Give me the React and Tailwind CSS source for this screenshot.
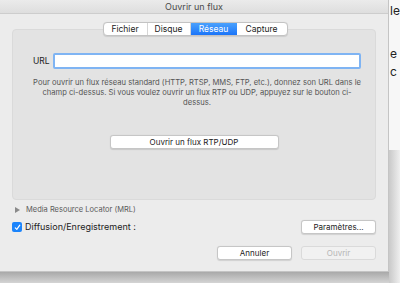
import React from "react";

const font = { fontFamily: "Inter, 'Liberation Sans', sans-serif" };

function Tab({ label, active, last }) {
  return (
    <div
      className={
        "h-full flex items-center justify-center text-[8.5px] " +
        (active
          ? "bg-gradient-to-b from-[#4aa1fd] to-[#1670f8] text-white"
          : "text-[#222] " + (last ? "" : "border-r border-[#d6d6d6]"))
      }
    >
      {label}
    </div>
  );
}

function Button({ children, className = "", disabled }) {
  return (
    <div
      className={
        "h-[14px] flex items-center justify-center rounded-[3px] border text-[8px] " +
        (disabled
          ? "bg-[#f1f1f1] border-[#dadada] text-[#b5b5b5]"
          : "bg-white border-[#c6c6c6] text-[#222] shadow-[0_0.5px_1px_rgba(0,0,0,0.12)]") +
        " " +
        className
      }
    >
      {children}
    </div>
  );
}

export default function App() {
  return (
    <div className="w-[400px] h-[283px] relative overflow-hidden bg-[#f7f7f7]" style={font}>
      {/* desktop behind the dialog */}
      <div className="absolute left-[390px] top-[2px] text-[12px] text-[#222]">le</div>
      <div className="absolute left-[390px] top-[45px] text-[12px] text-[#222]">e c</div>
      <div className="absolute left-0 top-[272px] w-[400px] h-[11px] bg-gradient-to-b from-[#a9a9a9] to-[#d4d4d4]" />
      <div className="absolute left-[389px] top-[150px] w-[11px] h-[133px] bg-gradient-to-r from-[#c9c9c9] to-[#efefef]" />

      {/* dialog window */}
      <div className="relative w-[389px] h-[272px] bg-[#ececec] border-r border-b border-[#c4c4c4] flex flex-col">
        <div className="h-[14px] shrink-0 flex items-center justify-center text-[9px] text-[#4a4a4a] bg-gradient-to-b from-[#ebebeb] to-[#dedede] border-b border-[#cdcdcd]">
          Ouvrir un flux
        </div>

        <div className="px-[12px] flex flex-col">
          {/* tabs */}
          <div className="relative z-10 mt-[8px] h-[14px] flex justify-center">
            <div className="ml-[2px] grid grid-cols-[44px_43px_46px_50px] h-full rounded-[4px] border border-[#c3c3c3] bg-white overflow-hidden shadow-[0_0.5px_1px_rgba(0,0,0,0.1)]">
              <Tab label="Fichier" />
              <Tab label="Disque" />
              <Tab label="Réseau" active />
              <Tab label="Capture" last />
            </div>
          </div>

          {/* group box */}
          <div className="mt-[-7px] h-[171px] rounded-[4px] bg-[#e3e3e3] border border-[#dadada] pt-[23px] pl-[20px] pr-[14px] flex flex-col">
            <div className="flex items-center gap-[3px]">
              <span className="text-[8.5px] text-[#222]">URL</span>
              <div className="flex-1 h-[16px] bg-white border-[2px] border-[#7fb4f3] rounded-[2px]" />
            </div>
            <p className="mt-[9px] text-center text-[7.6px] leading-[10px] text-[#555] whitespace-nowrap">
              Pour ouvrir un flux réseau standard (HTTP, RTSP, MMS, FTP, etc.), donnez son URL dans le
              <br />
              champ ci-dessus. Si vous voulez ouvrir un flux RTP ou UDP, appuyez sur le bouton ci-
              <br />
              dessus.
            </p>
            <div className="mt-[27px] flex justify-center">
              <Button className="w-[169px] mr-[6px]">Ouvrir un flux RTP/UDP</Button>
            </div>
          </div>
        </div>

        {/* MRL disclosure */}
        <div className="mt-[5px] pl-[15px] flex items-center h-[10px]">
          <svg width="5" height="6" viewBox="0 0 5 6" className="mr-[6px]">
            <path d="M0 0 L5 3 L0 6 Z" fill="#8a8a8a" />
          </svg>
          <span className="text-[7.5px] text-[#5a5a5a]">Media Resource Locator (MRL)</span>
        </div>

        {/* streaming row */}
        <div className="mt-[5px] pl-[12px] pr-[12px] flex items-center h-[14px]">
          <div className="w-[10px] h-[10px] rounded-[2px] bg-[#1b84fb] flex items-center justify-center">
            <svg width="7" height="7" viewBox="0 0 7 7">
              <path d="M1.3 3.8 L2.8 5.3 L5.8 1.2" stroke="white" strokeWidth="1.2" fill="none" strokeLinecap="round" strokeLinejoin="round" />
            </svg>
          </div>
          <span className="ml-[3px] text-[9px] text-[#222]">Diffusion/Enregistrement :</span>
          <Button className="ml-auto w-[75px]">Paramètres...</Button>
        </div>

        {/* bottom buttons */}
        <div className="mt-[12px] pr-[12px] flex justify-end gap-[9px]">
          <Button className="w-[75px]">Annuler</Button>
          <Button className="w-[75px]" disabled>Ouvrir</Button>
        </div>
      </div>
    </div>
  );
}
